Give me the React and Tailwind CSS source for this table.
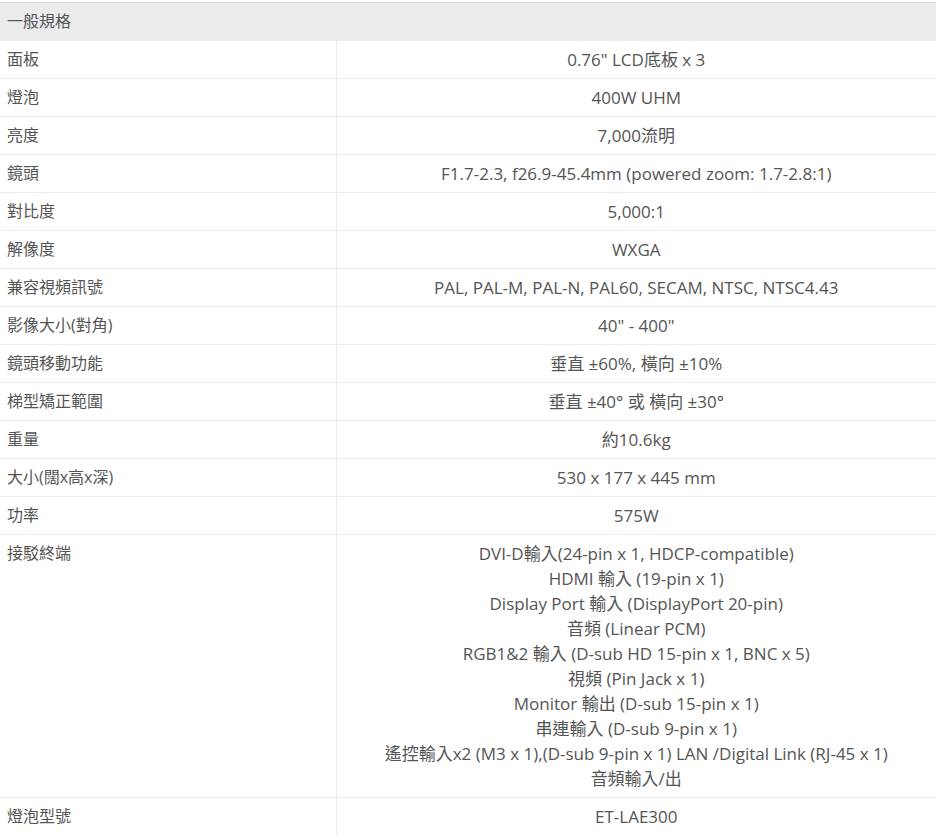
import React from 'react';

const specs = [
  ['面板', '0.76" LCD底板 x 3'],
  ['燈泡', '400W UHM'],
  ['亮度', '7,000流明'],
  ['鏡頭', 'F1.7-2.3, f26.9-45.4mm (powered zoom: 1.7-2.8:1)'],
  ['對比度', '5,000:1'],
  ['解像度', 'WXGA'],
  ['兼容視頻訊號', 'PAL, PAL-M, PAL-N, PAL60, SECAM, NTSC, NTSC4.43'],
  ['影像大小(對角)', '40" - 400"'],
  ['鏡頭移動功能', '垂直 ±60%, 橫向 ±10%'],
  ['梯型矯正範圍', '垂直 ±40° 或 橫向 ±30°'],
  ['重量', '約10.6kg'],
  ['大小(闊x高x深)', '530 x 177 x 445 mm'],
  ['功率', '575W'],
  [
    '接駁終端',
    [
      'DVI-D輸入(24-pin x 1, HDCP-compatible)',
      'HDMI 輸入 (19-pin x 1)',
      'Display Port 輸入 (DisplayPort 20-pin)',
      '音頻 (Linear PCM)',
      'RGB1&2 輸入 (D-sub HD 15-pin x 1, BNC x 5)',
      '視頻 (Pin Jack x 1)',
      'Monitor 輸出 (D-sub 15-pin x 1)',
      '串連輸入 (D-sub 9-pin x 1)',
      '遙控輸入x2 (M3 x 1),(D-sub 9-pin x 1) LAN /Digital Link (RJ-45 x 1)',
      '音頻輸入/出',
    ],
  ],
  ['燈泡型號', 'ET-LAE300'],
];

export default function App() {
  return (
    <div className="bg-white pt-[2px] text-[16px] text-[#555] font-['Open_Sans','Noto_Sans_CJK_TC',sans-serif]">
      <table className="w-[936px] border-collapse">
        <thead>
          <tr className="bg-[#ececef] border-t border-[#dcdcdf]">
            <th colSpan={2} className="h-[38px] px-[7px] py-0 text-left font-normal leading-[25px]">一般規格</th>
          </tr>
        </thead>
        <tbody>
          {specs.map(([label, value]) => (
            <tr key={label} className="border-b border-[#e8ecf0]">
              <td className="w-[336px] border-r border-[#e8ecf0] px-[7px] py-[6px] align-top leading-[25px]">{label}</td>
              <td className="px-[7px] py-[6px] text-center align-top text-[17px] leading-[25px]">
                {Array.isArray(value)
                  ? value.map((line) => <div key={line}>{line}</div>)
                  : value}
              </td>
            </tr>
          ))}
        </tbody>
      </table>
    </div>
  );
}
